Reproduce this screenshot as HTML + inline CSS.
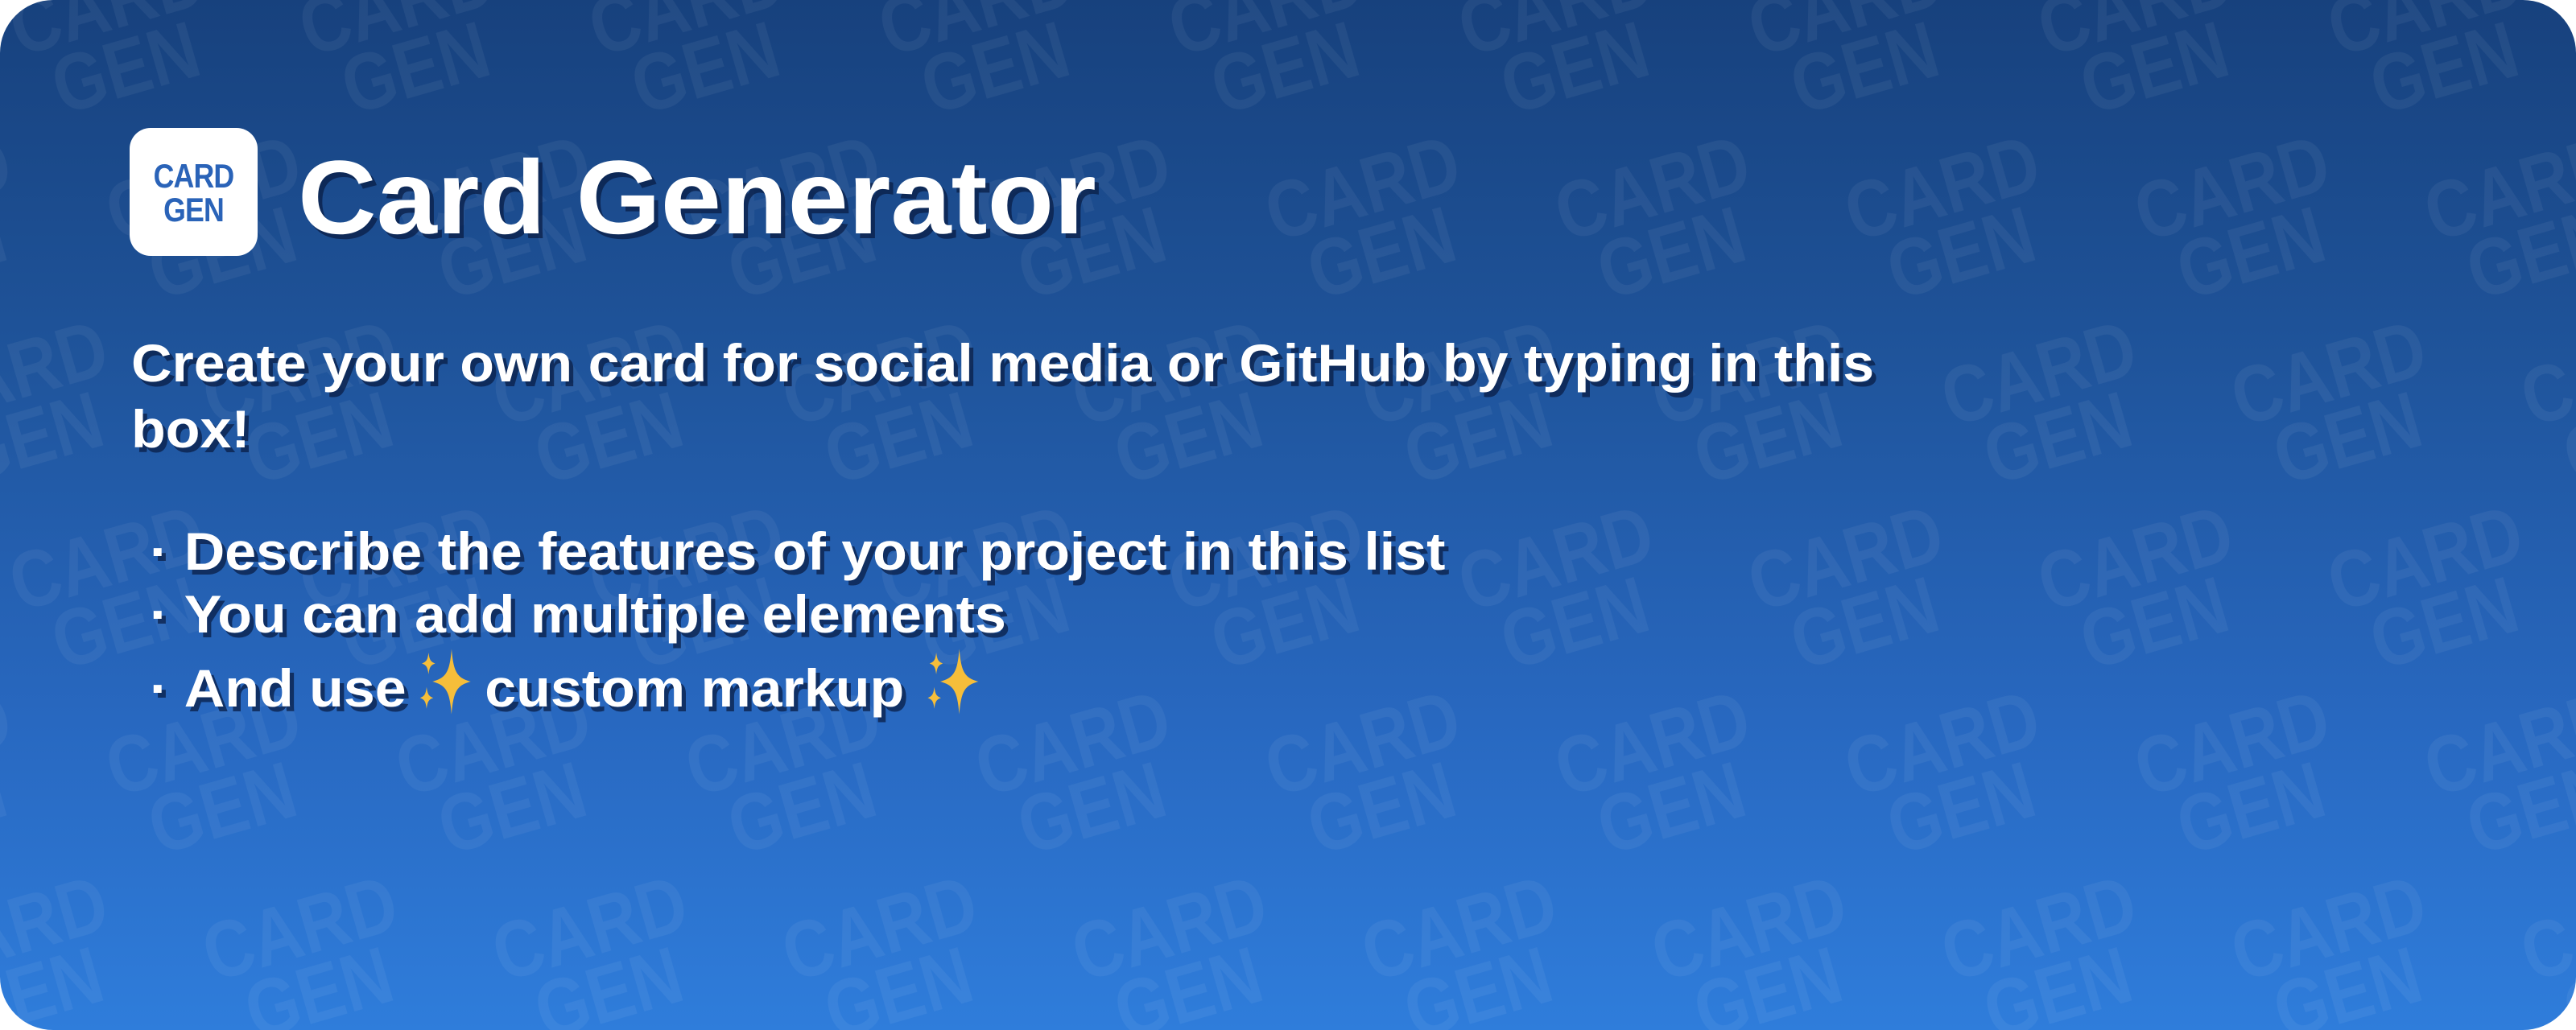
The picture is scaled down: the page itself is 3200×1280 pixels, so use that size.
<!DOCTYPE html>
<html><head><meta charset="utf-8"><style>
html,body{margin:0;padding:0;background:#fff;overflow:hidden;width:3200px;height:1280px;}
body{position:relative;}
.card{position:absolute;left:0;top:0;width:3200px;height:1280px;border-radius:66px;overflow:hidden;
background:linear-gradient(180deg,#17417d 0%,#1f549b 35%,#2868c0 70%,#2f7ddb 100%);}
.wm{position:absolute;font-family:"Liberation Sans",sans-serif;font-weight:bold;font-size:100px;line-height:84px;color:rgba(255,255,255,0.055);transform:rotate(-16deg) scaleX(0.85);text-align:center;white-space:nowrap;}
.t{position:absolute;font-family:"Liberation Sans",sans-serif;font-weight:bold;color:#fff;text-shadow:5px 6px 0 rgba(10,30,70,0.75);white-space:nowrap;}
.logo{position:absolute;left:161px;top:159px;width:159px;height:159px;border-radius:26px;background:#fff;}
.logo div{position:absolute;left:0;width:159px;text-align:center;font-family:"Liberation Sans",sans-serif;font-weight:bold;font-size:42px;color:#2a63b8;letter-spacing:-1px;transform:scaleX(0.85);}
svg.sp{display:inline-block;vertical-align:-14px;margin:0 8px;}
</style></head><body>
<div class="card">
<div id="wms"></div>
<div class="logo"><div style="top:36px">CARD</div><div style="top:78px">GEN</div></div>
<div class="t" style="left:370px;top:170px;font-size:130px;line-height:150px;transform-origin:0 0;transform:scaleX(1.04);">Card Generator</div>
<div class="t" style="left:163px;top:410px;font-size:66px;line-height:82px;transform-origin:0 0;transform:scaleX(1.06)">Create your own card for social media or GitHub by typing in this<br>box!</div>
<div class="t" style="left:186px;top:646px;font-size:66px;line-height:78px;transform-origin:0 0;transform:scaleX(1.06)">·&nbsp;Describe the features of your project in this list<br>·&nbsp;You can add multiple elements<br>·&nbsp;And use<svg class="sp" width="76" height="90" viewBox="0 0 60 80"><path d="M36 4 C38 30 42 36 56 40 C42 44 38 50 36 76 C34 50 30 44 16 40 C30 36 34 30 36 4Z" fill="#f6be3a"/><path d="M12 8 C13 16 14 18 19 20 C14 22 13 24 12 32 C11 24 10 22 5 20 C10 18 11 16 12 8Z" fill="#f6be3a"/><path d="M10 46 C11 54 12 56 17 58 C12 60 11 62 10 70 C9 62 8 60 3 58 C8 56 9 54 10 46Z" fill="#f6be3a"/></svg>custom markup<svg class="sp" width="76" height="90" viewBox="0 0 60 80" style="margin-left:20px"><path d="M36 4 C38 30 42 36 56 40 C42 44 38 50 36 76 C34 50 30 44 16 40 C30 36 34 30 36 4Z" fill="#f6be3a"/><path d="M12 8 C13 16 14 18 19 20 C14 22 13 24 12 32 C11 24 10 22 5 20 C10 18 11 16 12 8Z" fill="#f6be3a"/><path d="M10 46 C11 54 12 56 17 58 C12 60 11 62 10 70 C9 62 8 60 3 58 C8 56 9 54 10 46Z" fill="#f6be3a"/></svg></div>
</div>
<script>
var h='';
for(var r=-1;r<7;r++){for(var c=-1;c<10;c++){
var x=c*360+(r%2?180:0)-r*60; var y=r*230-40;
h+='<div class="wm" style="left:'+x+'px;top:'+y+'px">CARD<br>GEN</div>';}}
document.getElementById('wms').innerHTML=h;
</script>
</body></html>
